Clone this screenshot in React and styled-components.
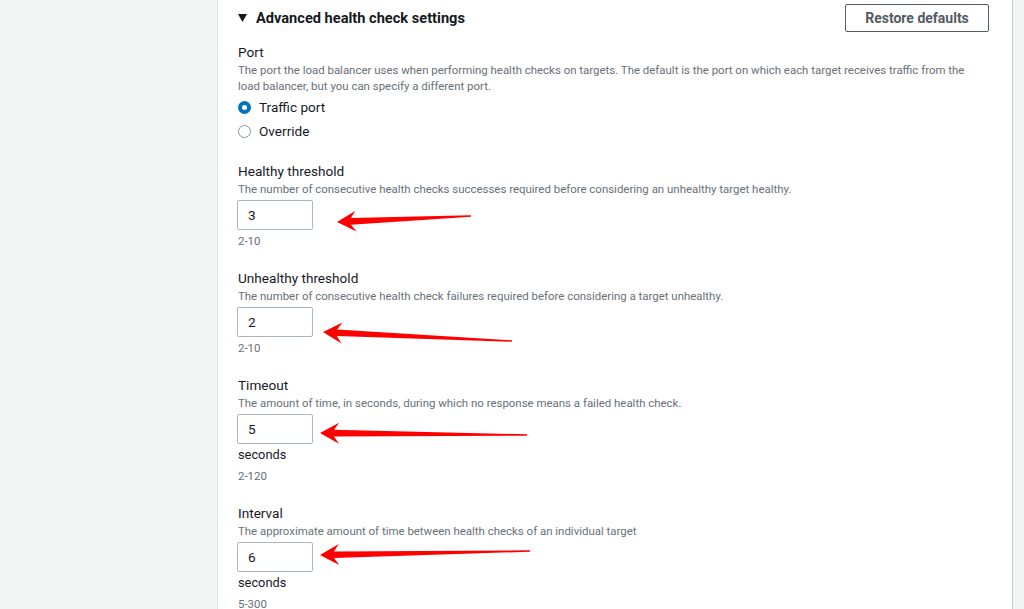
import React from 'react';
import styled, { createGlobalStyle } from 'styled-components';

const GlobalStyle = createGlobalStyle`
  html, body {
    margin: 0;
    padding: 0;
    height: 609px;
    overflow: hidden;
    background: #ffffff;
  }
  #root {
    height: 609px;
  }
  * {
    box-sizing: border-box;
  }
`;

const Page = styled.div`
  position: relative;
  display: flex;
  height: 609px;
  font-family: Roboto, 'Liberation Sans', sans-serif;
  color: #16191f;
`;

const Sidebar = styled.div`
  width: 218px;
  flex-shrink: 0;
  background: #f2f3f3;
  border-right: 1px solid #e1e4e4;
`;

const Panel = styled.div`
  flex: 1;
  padding: 4px 23px 0 20px;
  background: #ffffff;
  overflow: hidden;
`;

const Rail = styled.div`
  width: 12px;
  flex-shrink: 0;
  background: #f2f3f3;
  border-left: 1px solid #c9cfcf;
`;

const HeaderRow = styled.div`
  display: flex;
  align-items: center;
  justify-content: space-between;
  height: 28px;
  margin-bottom: 10px;
`;

const Heading = styled.div`
  display: flex;
  align-items: center;
  gap: 9px;
  font-size: 14.6px;
  font-weight: 700;
  color: #16191f;
`;

const Caret = styled.svg`
  width: 9px;
  height: 8px;
  fill: #16191f;
`;

const Button = styled.button`
  width: 144px;
  height: 28px;
  border: 1px solid #545b64;
  border-radius: 2px;
  background: #ffffff;
  font-family: inherit;
  font-size: 14px;
  font-weight: 700;
  color: #545b64;
  cursor: pointer;
`;

const Field = styled.div`
  margin-bottom: ${({ $gap }) => $gap}px;
`;

const Label = styled.div`
  font-size: 13.6px;
  line-height: 20px;
  color: #16191f;
`;

const Description = styled.div`
  font-size: 11.45px;
  line-height: 16px;
  color: #687078;
  max-width: 750px;
`;

const RadioGroup = styled.div`
  display: flex;
  flex-direction: column;
  margin-top: 1px;
`;

const RadioRow = styled.label`
  display: flex;
  align-items: center;
  gap: 8px;
  height: 24px;
  font-size: 13.6px;
  color: #16191f;
`;

const RadioDot = styled.span`
  width: 13px;
  height: 13px;
  border-radius: 50%;
  background: #ffffff;
  border: ${({ $checked }) => ($checked ? '4px solid #0073bb' : '1px solid #879596')};
`;

const Input = styled.div`
  width: 76px;
  height: 30px;
  margin-top: 3px;
  margin-left: -1px;
  padding-left: 10px;
  display: flex;
  align-items: center;
  border: 1px solid #aab7b8;
  border-radius: 2px;
  font-size: 13.6px;
  color: #16191f;
`;

const Unit = styled.div`
  margin-top: 1px;
  font-size: 12.8px;
  line-height: 20px;
  color: #16191f;
`;

const Constraint = styled.div`
  margin-top: 3px;
  font-size: 11.45px;
  line-height: 16px;
  color: #687078;
`;

const Overlay = styled.svg`
  position: absolute;
  top: 0;
  left: 0;
  width: 1024px;
  height: 609px;
  pointer-events: none;
`;

const fields = [
  {
    label: 'Healthy threshold',
    desc: 'The number of consecutive health checks successes required before considering an unhealthy target healthy.',
    value: '3',
    range: '2-10',
  },
  {
    label: 'Unhealthy threshold',
    desc: 'The number of consecutive health check failures required before considering a target unhealthy.',
    value: '2',
    range: '2-10',
  },
  {
    label: 'Timeout',
    desc: 'The amount of time, in seconds, during which no response means a failed health check.',
    value: '5',
    unit: 'seconds',
    range: '2-120',
  },
  {
    label: 'Interval',
    desc: 'The approximate amount of time between health checks of an individual target',
    value: '6',
    unit: 'seconds',
    range: '5-300',
  },
];

// annotation arrows: tip then tail
const arrows = [
  [337, 222, 471, 216],
  [323, 332, 512, 341],
  [320, 433, 527, 435],
  [320, 555, 530, 551],
];

const arrowPoints = ([x0, y0, x1, y1]) => {
  const dx = x1 - x0;
  const dy = y1 - y0;
  const len = Math.hypot(dx, dy);
  const ux = dx / len;
  const uy = dy / len;
  const nx = -uy;
  const ny = ux;
  const at = (d, w) => `${(x0 + ux * d + nx * w).toFixed(1)},${(y0 + uy * d + ny * w).toFixed(1)}`;
  const tail = (w) => `${(x1 + nx * w).toFixed(1)},${(y1 + ny * w).toFixed(1)}`;
  return [
    at(0, 0),
    at(19, 10.5),
    at(14, 3.3),
    tail(0.7),
    tail(-0.7),
    at(14, -3.3),
    at(19, -10.5),
  ].join(' ');
};

const App = () => (
  <>
    <GlobalStyle />
    <Page>
      <Sidebar />
      <Panel>
        <HeaderRow>
          <Heading>
            <Caret viewBox="0 0 9 8">
              <polygon points="0,0 9,0 4.5,8" />
            </Caret>
            Advanced health check settings
          </Heading>
          <Button>Restore defaults</Button>
        </HeaderRow>

        <Field $gap={18}>
          <Label>Port</Label>
          <Description>
            The port the load balancer uses when performing health checks on targets. The default is the port on which each target receives traffic from the load balancer, but you can specify a different port.
          </Description>
          <RadioGroup>
            <RadioRow>
              <RadioDot $checked />
              Traffic port
            </RadioRow>
            <RadioRow>
              <RadioDot />
              Override
            </RadioRow>
          </RadioGroup>
        </Field>

        {fields.map((f) => (
          <Field key={f.label} $gap={19}>
            <Label>{f.label}</Label>
            <Description>{f.desc}</Description>
            <Input>{f.value}</Input>
            {f.unit && <Unit>{f.unit}</Unit>}
            <Constraint>{f.range}</Constraint>
          </Field>
        ))}
      </Panel>
      <Rail />
      <Overlay viewBox="0 0 1024 609">
        {arrows.map((a, i) => (
          <polygon key={i} points={arrowPoints(a)} fill="#ff0000" />
        ))}
      </Overlay>
    </Page>
  </>
);

export default App;
